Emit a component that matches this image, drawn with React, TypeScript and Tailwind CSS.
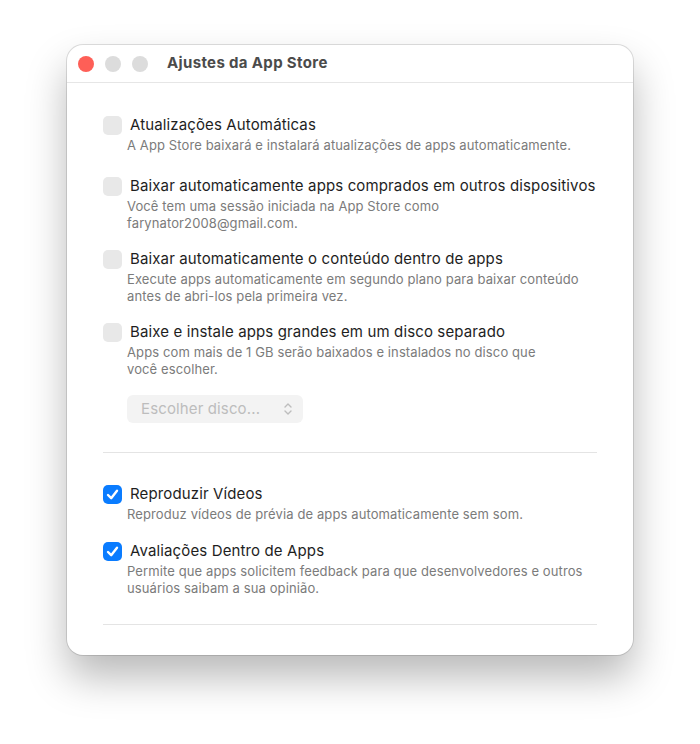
import React from 'react';

type Item = {
  label: string;
  lines: string[];
  checked: boolean;
};

const topItems: Item[] = [
  {
    label: 'Atualizações Automáticas',
    lines: ['A App Store baixará e instalará atualizações de apps automaticamente.'],
    checked: false,
  },
  {
    label: 'Baixar automaticamente apps comprados em outros dispositivos',
    lines: ['Você tem uma sessão iniciada na App Store como', 'farynator2008@gmail.com.'],
    checked: false,
  },
  {
    label: 'Baixar automaticamente o conteúdo dentro de apps',
    lines: ['Execute apps automaticamente em segundo plano para baixar conteúdo', 'antes de abri-los pela primeira vez.'],
    checked: false,
  },
  {
    label: 'Baixe e instale apps grandes em um disco separado',
    lines: ['Apps com mais de 1 GB serão baixados e instalados no disco que', 'você escolher.'],
    checked: false,
  },
];

const bottomItems: Item[] = [
  {
    label: 'Reproduzir Vídeos',
    lines: ['Reproduz vídeos de prévia de apps automaticamente sem som.'],
    checked: true,
  },
  {
    label: 'Avaliações Dentro de Apps',
    lines: ['Permite que apps solicitem feedback para que desenvolvedores e outros', 'usuários saibam a sua opinião.'],
    checked: true,
  },
];

const Checkbox: React.FC<{ checked: boolean }> = ({ checked }) =>
  checked ? (
    <span className="flex h-[19px] w-[19px] shrink-0 items-center justify-center rounded-[5px] bg-[#0a7cff]">
      <svg width="15" height="15" viewBox="0 0 15 15" fill="none">
        <path d="M3 8 L6.2 11.2 L12 3.8" stroke="white" strokeWidth="2.4" strokeLinecap="round" strokeLinejoin="round" />
      </svg>
    </span>
  ) : (
    <span className="h-[19px] w-[19px] shrink-0 rounded-[5px] bg-[#e8e8e8]" />
  );

const Option: React.FC<{ item: Item; extra?: boolean }> = ({ item, extra }) => (
  <div className={`flex flex-col ${extra ? 'mb-[5px]' : ''}`}>
    <div className="flex items-center gap-[8px]">
      <Checkbox checked={item.checked} />
      <span className="text-[15px] leading-[20px] tracking-[0.13px] text-[#1e1e1e]">{item.label}</span>
    </div>
    <div className="mt-[2px] pl-[24px] text-[13px] leading-[17px] tracking-[0.11px] text-[#7b7b7b]">
      {item.lines.map((l) => (
        <div key={l}>{l}</div>
      ))}
    </div>
  </div>
);

export default function App() {
  return (
    <div
      className="min-h-[744px] bg-white pl-[67px] pt-[45px]"
      style={{ fontFamily: 'Inter, "Noto Sans", sans-serif' }}
    >
      <div className="h-[610px] w-[566px] overflow-hidden rounded-[16px] bg-white shadow-[0_22px_40px_rgba(0,0,0,0.28),0_0_0_1px_rgba(0,0,0,0.12)]">
        {/* title bar */}
        <div className="flex h-[38px] items-center border-b border-[#e6e6e6] pl-[11px]">
          <div className="flex gap-[11px]">
            <span className="h-[16px] w-[16px] rounded-full bg-[#fe5f57]" />
            <span className="h-[16px] w-[16px] rounded-full bg-[#dcdcdc]" />
            <span className="h-[16px] w-[16px] rounded-full bg-[#dcdcdc]" />
          </div>
          <span className="ml-[19px] text-[15px] font-bold tracking-[0.35px] text-[#4b4b4b]">Ajustes da App Store</span>
        </div>

        <div className="px-[36px] pt-[32px]">
          <div className="flex flex-col gap-[17px]">
            {topItems.map((it, i) => (
              <Option key={it.label} item={it} extra={i === 0} />
            ))}
          </div>

          <div className="mt-[17px] pl-[24px]">
            <div className="flex h-[28px] w-[176px] items-center justify-between rounded-[6px] bg-[#f3f3f3] pl-[14px] pr-[10px] text-[15px] tracking-[0.13px] text-[#bdbdbd]">
              <span>Escolher disco...</span>
              <svg width="10" height="14" viewBox="0 0 10 14" fill="none">
                <path d="M2 5 L5 2 L8 5 M2 9 L5 12 L8 9" stroke="#bdbdbd" strokeWidth="1.4" strokeLinecap="round" strokeLinejoin="round" />
              </svg>
            </div>
          </div>

          <div className="mt-[29px] border-t border-[#e4e4e4]" />

          <div className="mt-[31px] flex flex-col gap-[18px]">
            {bottomItems.map((it) => (
              <Option key={it.label} item={it} />
            ))}
          </div>

          <div className="mt-[27px] border-t border-[#e4e4e4]" />
        </div>
      </div>
    </div>
  );
}
